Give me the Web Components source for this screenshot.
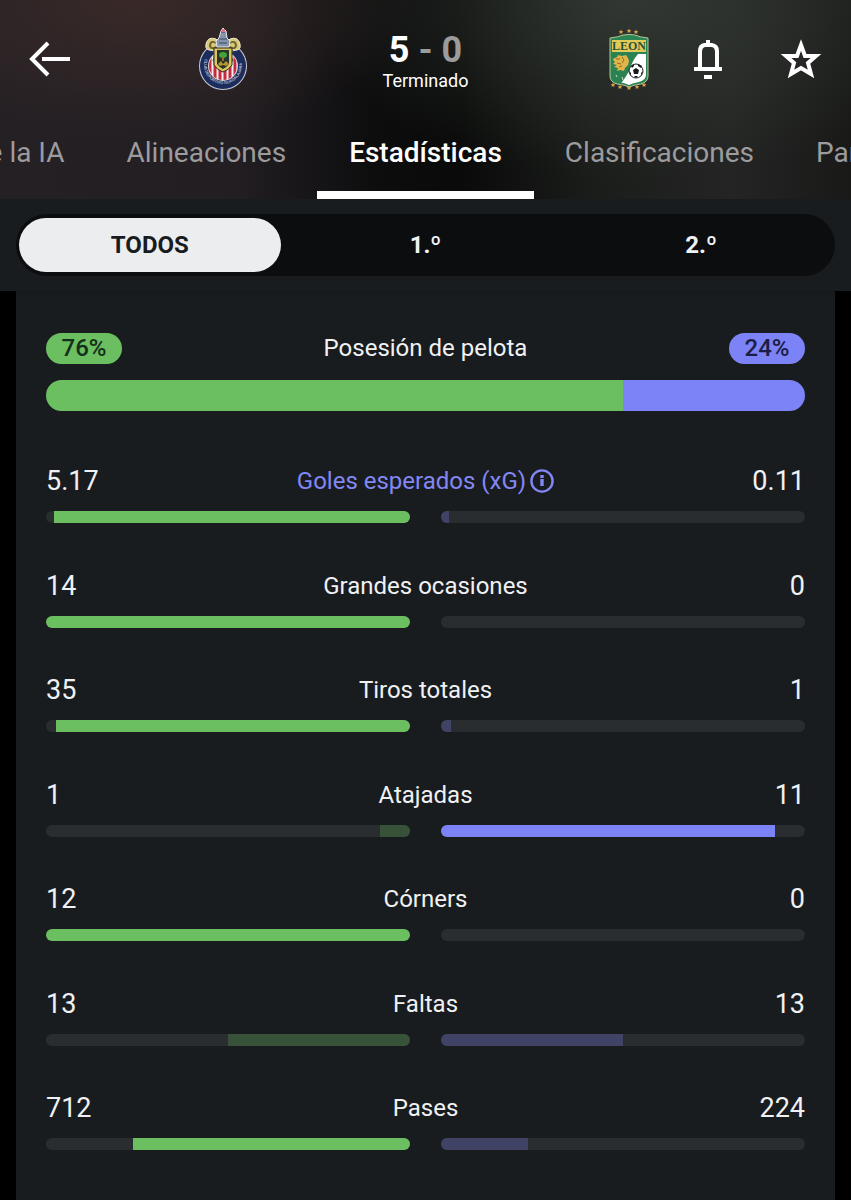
<!DOCTYPE html>
<html lang="es">
<head>
<meta charset="utf-8">
<meta name="viewport" content="width=device-width, initial-scale=1">
<title>Guadalajara 5 - 0 León</title>
<style>
  body {
    margin: 0;
    background: #000;
    color: #f0f1f3;
    font-family: Roboto, "Liberation Sans", sans-serif;
  }
</style>
</head>
<body>
<match-page>
  <match-header slot="header" home="5" away="0" status="Terminado">
    <crest-guadalajara slot="home"></crest-guadalajara>
    <crest-leon slot="away"></crest-leon>
  </match-header>
  <match-tabs slot="header"></match-tabs>
  <period-filter slot="filter"></period-filter>
  <possession-bar home="76" away="24">Posesión de pelota</possession-bar>
  <stats-list>
    <stat-row home="5.17" away="0.11" info>Goles esperados (xG)</stat-row>
    <stat-row home="14" away="0">Grandes ocasiones</stat-row>
    <stat-row home="35" away="1">Tiros totales</stat-row>
    <stat-row home="1" away="11">Atajadas</stat-row>
    <stat-row home="12" away="0">Córners</stat-row>
    <stat-row home="13" away="13">Faltas</stat-row>
    <stat-row home="712" away="224">Pases</stat-row>
  </stats-list>
</match-page>

<script>
class MatchPage extends HTMLElement
{
  constructor()
  {
    super();
    this.attachShadow( { mode: 'open' } );
    this.shadowRoot.innerHTML = `
    <style>
      :host {
        display: flex;
        flex-direction: column;
        min-height: 100vh;
      }

      header {
        background:
          radial-gradient(ellipse 280px 140px at 16% 0, rgba(66,46,42,0.7), transparent),
          radial-gradient(ellipse 320px 180px at 74% 0, rgba(56,63,57,0.75), transparent),
          linear-gradient(90deg, #242024 0%, #221e22 28%, #0d0d0e 44%, #090a09 54%, #1b1d1b 70%, #232423 86%, #191a18 100%);
      }

      .filter {
        padding: 15px 16px;
        background: #191c1f;
      }

      main {
        flex: 1;
        display: flex;
        flex-direction: column;
        gap: 54px;
        margin: 0 16px;
        padding: 42px 30px 3px;
        background: linear-gradient(#15181a, #191c1f 6px);
      }
    </style>
    <header><slot name="header"></slot></header>
    <div class="filter"><slot name="filter"></slot></div>
    <main><slot></slot></main>
    `;
  }
}
customElements.define( 'match-page', MatchPage );


class MatchHeader extends HTMLElement
{
  constructor()
  {
    super();
    this.attachShadow( { mode: 'open' } );
    this.shadowRoot.innerHTML = `
    <style>
      :host {
        display: grid;
        grid-template-columns: 1fr auto 1fr;
        align-items: center;
        height: 118px;
        padding: 0 24px;
      }

      .side {
        display: flex;
        align-items: center;
        justify-content: space-between;
      }

      .home {
        padding-right: 136px;
      }

      .away {
        padding-left: 140px;
      }

      .actions {
        display: flex;
        gap: 41px;
      }

      button {
        display: block;
        padding: 0;
        border: 0;
        background: none;
        color: #fff;
      }

      svg {
        display: block;
      }

      .score {
        width: 86px;
        padding-top: 4px;
        text-align: center;
        color: #fff;
      }

      .goals {
        font-size: 36px;
        line-height: 40px;
        font-weight: 700;
        white-space: nowrap;
      }

      .lost {
        color: #9b9b9b;
      }

      .status {
        font-size: 18px;
        line-height: 22px;
      }
    </style>
    <div class="side home">
      <button type="button" aria-label="Volver">
        <svg width="52" height="52" viewBox="0 0 52 52" fill="none" stroke="currentColor" stroke-width="4">
          <path d="M24 10 8 26l16 16M18 26h28"/>
        </svg>
      </button>
      <slot name="home"></slot>
    </div>
    <div class="score">
      <div class="goals"><span class="h"></span> <span class="lost">- <span class="a"></span></span></div>
      <div class="status"></div>
    </div>
    <div class="side away">
      <slot name="away"></slot>
      <div class="actions">
        <button type="button" aria-label="Notificaciones">
          <svg width="52" height="52" viewBox="0 0 52 52" fill="currentColor">
            <path d="M24 7h4v3h2q7 1 7 8v16h3v4H12v-4h4V18q0-7 6-8h2zM24 14q-4 0-4 5v15h13V19q0-5-4-5z" fill-rule="evenodd"/>
            <path d="M22 42h8v4h-8z"/>
          </svg>
        </button>
        <button type="button" aria-label="Favorito">
          <svg width="52" height="52" viewBox="0 0 52 52" fill="none" stroke="currentColor" stroke-width="4">
            <path d="M26 12l4 11h11l-8 7 3 11-10-6-10 6 3-11-8-7h11z"/>
          </svg>
        </button>
      </div>
    </div>
    `;
  }

  static get observedAttributes ()
  {
    return [ 'home', 'away', 'status' ];
  }

  attributeChangedCallback ( name, oldValue, newValue )
  {
    switch ( name )
    {
      case 'home':
        this.shadowRoot.querySelector( '.h' ).textContent = newValue;
        break;
      case 'away':
        this.shadowRoot.querySelector( '.a' ).textContent = newValue;
        break;
      case 'status':
        this.shadowRoot.querySelector( '.status' ).textContent = newValue;
        break;
    }
  }
}
customElements.define( 'match-header', MatchHeader );


class CrestGuadalajara extends HTMLElement
{
  constructor()
  {
    super();
    this.attachShadow( { mode: 'open' } );
    this.shadowRoot.innerHTML = `
    <style>
      :host { display: block; }
      svg { display: block; }
    </style>
    <svg width="48" height="62" viewBox="0 0 48 62" role="img" aria-label="Guadalajara">
      <defs>
        <clipPath id="disc"><circle cx="24" cy="38" r="14"/></clipPath>
        <path id="ring" d="M6 31A19 19 0 1 0 42 31"/>
      </defs>
      <circle cx="24" cy="38" r="24" fill="#c9ccd8"/>
      <circle cx="24" cy="38" r="23" fill="#1c2c5c"/>
      <circle cx="24" cy="38" r="15" fill="#dfd3d6"/>
      <g clip-path="url(#disc)">
        <rect x="9" y="23" width="30" height="30" fill="#f3f0f2"/>
        <path d="M11 23v30M16 23v30M21 23v30M26 23v30M31 23v30M36 23v30" stroke="#c42b3c" stroke-width="3"/>
      </g>
      <text font-family="Liberation Sans" font-size="4" font-weight="700" fill="#b6bdd2"><textPath href="#ring">CLUB DEPORTIVO GUADALAJARA</textPath></text>
      <path d="M17 22Q5 24 7 16q2-8 10-5l5 6h4l5-6q8-3 10 5 2 8-10 6z" fill="#d9c878" stroke="#f2ecd0"/>
      <path d="M18 19q-7 3-7-2 1-5 6-2M30 19q7 3 7-2-1-5-6-2M14 23q5 4 0 10M34 23q-5 4 0 10" fill="none" stroke="#6c6431" stroke-width="2"/>
      <path d="M22 3l2-3 3 3 1 7 3 3-1 6H18l-1-6 3-3z" fill="#8495ac" stroke="#e8e8ee"/>
      <path d="M22 4h4M20 11h8M20 15h8" stroke="#3b465c"/>
      <path d="M23 1h3v3h-3z" fill="#d77880"/>
      <path d="M15 20h18v17q-3 5-9 7-6-2-9-7z" fill="#dcc65c" stroke="#2b2a23"/>
      <path d="M18 22h12v14q-2 3-6 5-4-2-6-5z" fill="#26352b"/>
      <ellipse cx="24" cy="27" rx="4" ry="3" fill="#43a23a"/>
      <path d="M23 29h2v4h-2z" fill="#98702c"/>
      <path d="M19 36l3-3 2 3 3-3 3 3-3 2-3-1-3 1z" fill="#b9942c"/>
    </svg>
    `;
  }
}
customElements.define( 'crest-guadalajara', CrestGuadalajara );


class CrestLeon extends HTMLElement
{
  constructor()
  {
    super();
    this.attachShadow( { mode: 'open' } );
    this.shadowRoot.innerHTML = `
    <style>
      :host { display: block; }
      svg { display: block; }
    </style>
    <svg width="40" height="62" viewBox="0 0 40 62" role="img" aria-label="León">
      <defs>
        <path id="star" d="M0-2.4.7-.8 2.4-.7 1.1.4 1.5 2 0 1.1-1.5 2-1.1.4-2.4-.7-.7-.8z" fill="#e0a64c"/>
        <clipPath id="shield"><path d="M3 25h34v22q0 5-7 7-6 1-10 3-4-2-10-3-7-2-7-7z"/></clipPath>
      </defs>
      <path d="M1 10q9-1 13-3 6-1 12 0 4 2 13 3v38q0 6-7 8-8 1-12 3-4-2-12-3-7-2-7-8z" fill="#2c8353" stroke="#b9c792"/>
      <rect x="3" y="12" width="34" height="12" fill="#e3cb57"/>
      <text x="20" y="22" text-anchor="middle" font-family="Liberation Serif" font-size="12" font-weight="700" fill="#28543a">LEON</text>
      <g clip-path="url(#shield)">
        <rect x="3" y="25" width="34" height="34" fill="#2a8152"/>
        <path d="M29 26h9v32H10q8-10 11-17 2-8 8-15z" fill="#fff"/>
      </g>
      <path d="M4 31l4-2 1-2 4 1 4-1 2 3 1 3-1 4-3 3-1 3-4-1-3 1 1-3-4-1 3-2-4-1 2-2-2-2z" fill="#e3b548"/>
      <path d="M7 31h4M8 35l4 1M13 29l2 3-2 3M10 39l3-1" stroke="#8c6c26" fill="none"/>
      <circle cx="27" cy="43" r="7" fill="#fff" stroke="#222"/>
      <path d="M27 40l3 2-1 4h-4l-1-4zM22 38l3-2v2l-2 2zM29 36l4 2-1 2-3-2zM20 43l2 2v3zM34 43l-2 2v3zM25 48h4l-2 2z" fill="#1b1b1b"/>
      <path d="M7 47l1 2M13 49l1 3" stroke="#cfe0c8"/>
      <use href="#star" x="12" y="4"/><use href="#star" x="20" y="3"/><use href="#star" x="27" y="4"/>
      <use href="#star" x="4" y="57"/><use href="#star" x="11" y="59"/><use href="#star" x="20" y="60"/><use href="#star" x="28" y="59"/><use href="#star" x="35" y="57"/>
    </svg>
    `;
  }
}
customElements.define( 'crest-leon', CrestLeon );


class MatchTabs extends HTMLElement
{
  constructor()
  {
    super();
    this.attachShadow( { mode: 'open' } );
    this.shadowRoot.innerHTML = `
    <style>
      /* the active tab stays in the middle, the others run off both ends */
      :host {
        display: grid;
        grid-template-columns: minmax(0, 1fr) auto minmax(0, 1fr);
        height: 81px;
        overflow: hidden;
      }

      .before, .after {
        display: flex;
      }

      .before {
        justify-content: flex-end;
      }

      a {
        box-sizing: border-box;
        flex: none;
        height: 81px;
        padding: 18px 31px 0;
        border-bottom: 8px solid transparent;
        color: #9c9b9d;
        font-size: 28px;
        line-height: 34px;
        text-decoration: none;
        white-space: nowrap;
      }

      a.active {
        padding: 18px 32px 0;
        color: #fff;
        font-weight: 500;
        border-color: #fff;
      }
    </style>
    <div class="before">
      <a href="#ia">de la IA</a>
      <a href="#alineaciones">Alineaciones</a>
    </div>
    <a class="active" href="#estadisticas" aria-current="page">Estadísticas</a>
    <div class="after">
      <a href="#clasificaciones">Clasificaciones</a>
      <a href="#partidos">Partidos</a>
    </div>
    `;
  }
}
customElements.define( 'match-tabs', MatchTabs );


class PeriodFilter extends HTMLElement
{
  constructor()
  {
    super();
    this.attachShadow( { mode: 'open' } );
    this.shadowRoot.innerHTML = `
    <style>
      :host {
        display: grid;
        grid-template-columns: repeat(3, 1fr);
        gap: 14px;
        padding: 4px 3px;
        border-radius: 31px;
        background: #0c0d0f;
      }

      button {
        height: 54px;
        padding: 0;
        border: 0;
        border-radius: 27px;
        background: none;
        color: #f0f1f3;
        font: 700 24px/32px Roboto, "Liberation Sans", sans-serif;
      }

      button[aria-pressed="true"] {
        background: #ecedef;
        color: #191c1f;
      }
    </style>
    <button type="button" aria-pressed="true">TODOS</button>
    <button type="button" aria-pressed="false">1.º</button>
    <button type="button" aria-pressed="false">2.º</button>
    `;
    this.shadowRoot.addEventListener( 'click', e =>
    {
      const picked = e.target.closest( 'button' );
      if ( !picked ) return;
      this.shadowRoot.querySelectorAll( 'button' ).forEach( b => b.setAttribute( 'aria-pressed', b === picked ) );
    } );
  }
}
customElements.define( 'period-filter', PeriodFilter );


class PossessionBar extends HTMLElement
{
  connectedCallback ()
  {
    const home = this.getAttribute( 'home' );
    const away = this.getAttribute( 'away' );
    this.attachShadow( { mode: 'open' } );
    this.shadowRoot.innerHTML = `
    <style>
      :host {
        display: block;
      }

      .top {
        display: flex;
        justify-content: space-between;
        align-items: center;
        margin-bottom: 16px;
        font-size: 24px;
        line-height: 31px;
      }

      .pill {
        width: 76px;
        border-radius: 16px;
        background: #6bbf60;
        color: #14301a;
        font-size: 24px;
        font-weight: 500;
        text-align: center;
      }

      .pill.away {
        background: #7c83f7;
        color: #1b1e45;
      }

      .bar {
        display: flex;
        height: 31px;
        border-radius: 16px;
        overflow: hidden;
      }

      .bar .home {
        flex: ${home};
        background: #6bbf60;
      }

      .bar .away {
        flex: ${away};
        background: #7c83f7;
      }
    </style>
    <div class="top">
      <span class="pill">${home}%</span>
      <slot></slot>
      <span class="pill away">${away}%</span>
    </div>
    <div class="bar"><div class="home"></div><div class="away"></div></div>
    `;
  }
}
customElements.define( 'possession-bar', PossessionBar );


class StatsList extends HTMLElement
{
  constructor()
  {
    super();
    this.attachShadow( { mode: 'open' } );
    this.shadowRoot.innerHTML = `
    <style>
      :host {
        flex: 1;
        display: grid;
        grid-auto-rows: 1fr;
      }
    </style>
    <slot></slot>
    `;
  }
}
customElements.define( 'stats-list', StatsList );


class StatRow extends HTMLElement
{
  connectedCallback ()
  {
    const home = Number( this.getAttribute( 'home' ) );
    const away = Number( this.getAttribute( 'away' ) );
    const share = home / ( home + away ) * 100;
    const icon = `
      <svg width="24" height="24" viewBox="0 0 24 24" fill="none" stroke="currentColor" stroke-width="2.4">
        <circle cx="12" cy="12" r="10.6"/>
        <path d="M12 10v7M12 6v3" stroke-width="3.4"/>
      </svg>`;
    this.attachShadow( { mode: 'open' } );
    this.shadowRoot.innerHTML = `
    <style>
      :host {
        display: block;
        min-height: 90px;
      }

      .top {
        display: grid;
        grid-template-columns: 1fr auto 1fr;
        margin-bottom: 14px;
        font-size: 27px;
        line-height: 32px;
      }

      .right {
        text-align: right;
      }

      .label {
        display: flex;
        align-items: center;
        gap: 4px;
        font-size: 24px;
      }

      :host([info]) .label {
        color: #8287f5;
      }

      .bars {
        display: grid;
        grid-template-columns: 1fr 1fr;
        gap: 31px;
      }

      .track {
        display: flex;
        height: 12px;
        border-radius: 6px;
        overflow: hidden;
        background: #2a2d30;
      }

      .track.home {
        justify-content: flex-end;
      }

      .home .fill {
        width: ${share}%;
        background: ${home > away ? '#6bbf60' : '#38523a'};
      }

      .away .fill {
        width: ${100 - share}%;
        background: ${away > home ? '#7c83f7' : '#404365'};
      }
    </style>
    <div class="top">
      <span>${this.getAttribute( 'home' )}</span>
      <span class="label"><slot></slot>${this.hasAttribute( 'info' ) ? icon : ''}</span>
      <span class="right">${this.getAttribute( 'away' )}</span>
    </div>
    <div class="bars">
      <div class="track home"><div class="fill"></div></div>
      <div class="track away"><div class="fill"></div></div>
    </div>
    `;
  }
}
customElements.define( 'stat-row', StatRow );
</script>
</body>
</html>
